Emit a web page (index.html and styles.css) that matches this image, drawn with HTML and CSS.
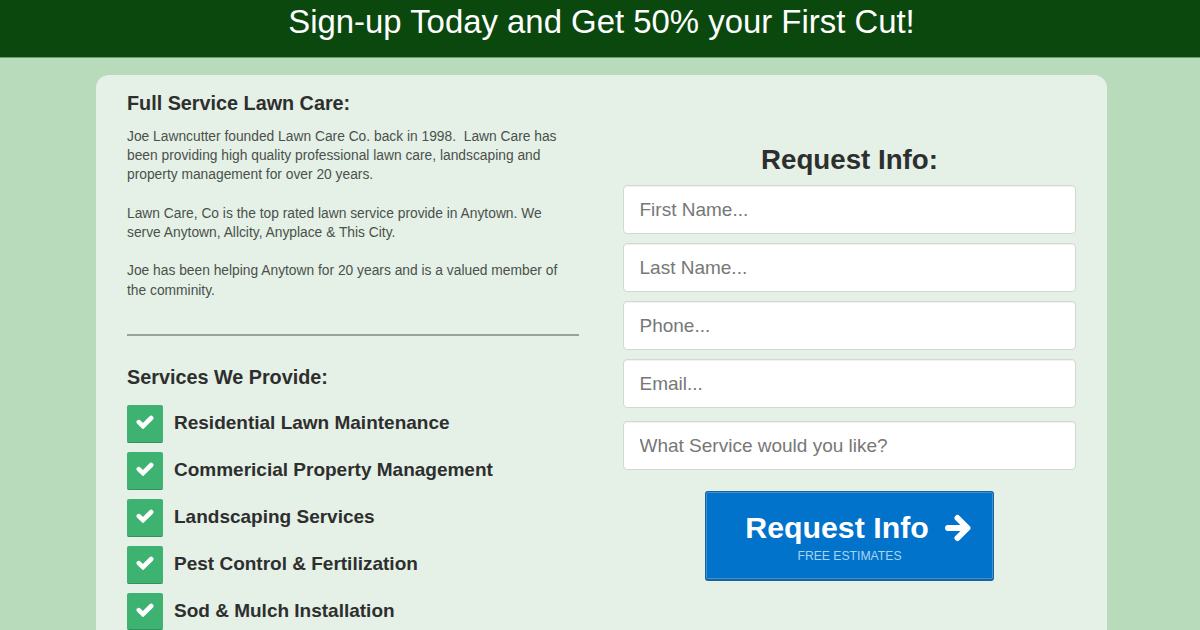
FILE: index.html
```html
<!DOCTYPE html>
<html lang="en">

<head>
    <meta charset="UTF-8">
    <meta name="viewport" content="width=device-width, initial-scale=1.0">
    <title>Lawn Care Co.</title>
    <link rel="stylesheet" href="styles.css">
</head>

<body>
    <svg width="0" height="0" class="icons">
        <symbol id="check" viewBox="0 0 18 14">
            <path d="M2.8 7.1 L7 11.1 L15.2 3" />
        </symbol>
        <symbol id="arrow" viewBox="0 0 26 28">
            <path d="M3 14 H21 M12.5 4 L22.5 14 L12.5 24" />
        </symbol>
    </svg>

    <header class="banner">
        <h1>Sign-up Today and Get 50% your First Cut!</h1>
    </header>

    <main class="content">
        <section class="about">
            <h2>Full Service Lawn Care:</h2>
            <p>Joe Lawncutter founded Lawn Care Co. back in 1998.&nbsp; Lawn Care has<br>
                been providing high quality professional lawn care, landscaping and<br>
                property management for over 20 years.</p>
            <p>Lawn Care, Co is the top rated lawn service provide in Anytown. We<br>
                serve Anytown, Allcity, Anyplace &amp; This City.</p>
            <p>Joe has been helping Anytown for 20 years and is a valued member of<br>
                the comminity.</p>
            <hr>
            <h2>Services We Provide:</h2>
            <ul class="services">
                <li><span class="tick"><svg><use href="#check" /></svg></span>Residential Lawn Maintenance</li>
                <li><span class="tick"><svg><use href="#check" /></svg></span>Commericial Property Management</li>
                <li><span class="tick"><svg><use href="#check" /></svg></span>Landscaping Services</li>
                <li><span class="tick"><svg><use href="#check" /></svg></span>Pest Control &amp; Fertilization</li>
                <li><span class="tick"><svg><use href="#check" /></svg></span>Sod &amp; Mulch Installation</li>
            </ul>
        </section>

        <form class="request-form" action="#" method="post">
            <h2>Request Info:</h2>
            <input type="text" name="first_name" placeholder="First Name...">
            <input type="text" name="last_name" placeholder="Last Name...">
            <input type="tel" name="phone" placeholder="Phone...">
            <input type="email" name="email" placeholder="Email...">
            <input type="text" name="service" class="service" placeholder="What Service would you like?">
            <button type="submit">
                <span class="main">Request Info <svg><use href="#arrow" /></svg></span>
                <span class="sub">FREE ESTIMATES</span>
            </button>
        </form>
    </main>
</body>

</html>
```

FILE: styles.css
```css
* {
    box-sizing: border-box;
}

body {
    margin: 0;
    background: #b8dbbc;
    color: #2d2f2e;
    font-family: "Liberation Sans", Arial, sans-serif;
}

h1,
h2,
p,
ul {
    margin: 0;
    padding: 0;
}

.icons {
    display: block;
}

svg {
    fill: none;
    stroke: #fff;
}

.banner {
    height: 58px;
    background: #0b480e;
    border-bottom: 1px solid #6a9a6d;
    text-align: center;
}

.banner h1 {
    padding: 2px 0 0 3px;
    font-size: 32.9px;
    font-weight: normal;
    line-height: 40px;
    color: #fff;
}

.content {
    display: flex;
    gap: 44px;
    width: 1011px;
    height: 555px;
    margin: 17px 0 0 96px;
    padding: 0 31px;
    overflow: hidden;
    border-radius: 13px 13px 0 0;
    background: #e5f0e6;
}

.about {
    width: 453px;
    padding-top: 15px;
}

.about h2 {
    font-size: 19.8px;
    line-height: 26px;
}

.about p {
    margin: 0 0 19.2px;
    font-size: 13.8px;
    line-height: 19.2px;
    color: #4a504c;
}

.about h2 + p {
    margin-top: 11px;
}

.about hr {
    height: 2px;
    margin: 34px 0 28px;
    border: none;
    background: #97a299;
}

.services {
    margin-top: 15px;
    list-style: none;
}

.services li {
    display: flex;
    height: 38px;
    margin-bottom: 9px;
    font-size: 19px;
    font-weight: bold;
    line-height: 35px;
}

.services li:last-child {
    height: 37px;
    margin-bottom: 0;
}

.tick {
    display: flex;
    justify-content: center;
    width: 36px;
    height: 100%;
    margin-right: 11px;
    padding-top: 10px;
    border-radius: 2px;
    border-bottom: 1px solid #35915c;
    background: #3eb371;
}

.tick svg {
    width: 18px;
    height: 14px;
    stroke-width: 4.6;
    stroke-linecap: round;
}

.request-form {
    display: flex;
    flex-direction: column;
    width: 454px;
    padding-top: 68px;
}

.request-form h2 {
    margin-bottom: 8px;
    font-size: 27.7px;
    line-height: 34px;
    text-align: center;
}

.request-form input {
    height: 49px;
    margin: 0 0 9px;
    padding: 0 15.5px;
    border: 1px solid #d3d8d4;
    border-radius: 4px;
    background: #fff;
    box-shadow: inset 0 1px 1px rgba(0, 0, 0, 0.06);
    font-family: inherit;
    font-size: 19px;
    color: #555;
}

.request-form input::placeholder {
    color: #777;
}

.request-form .service {
    margin: 4px 0 21px;
}

.request-form button {
    align-self: center;
    width: 289px;
    height: 90px;
    padding: 5px 0 0;
    border: 1px solid #1c629c;
    border-bottom-width: 2px;
    border-radius: 3px;
    background: #0273ca;
    box-shadow: inset 0 0 0 1px #3d92d4;
    font-family: inherit;
    color: #fff;
}

button .main {
    display: flex;
    align-items: center;
    justify-content: center;
    gap: 16px;
    padding-left: 17px;
    font-size: 30.3px;
    font-weight: bold;
    line-height: 35px;
}

button .main svg {
    width: 26px;
    height: 28px;
    stroke-width: 6;
    stroke-linecap: round;
    stroke-linejoin: round;
}

button .sub {
    display: block;
    margin-top: 1px;
    font-size: 12.2px;
    line-height: 20px;
    color: #a9d3f3;
}
```
